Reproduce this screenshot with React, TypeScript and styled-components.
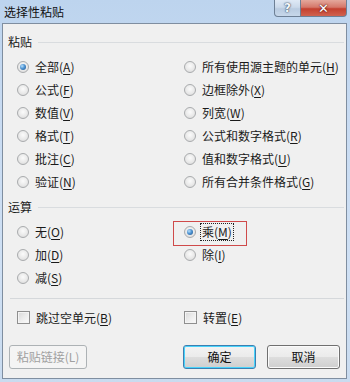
import React from 'react';
import styled, { createGlobalStyle, css } from 'styled-components';

const GlobalStyle = createGlobalStyle`
  html, body { margin: 0; padding: 0; }
  body {
    width: 350px;
    height: 382px;
    overflow: hidden;
    font-family: "Noto Sans CJK SC", "Microsoft YaHei", sans-serif;
    color: #1a1a1a;
  }
`;

const Window = styled.div`
  width: 350px;
  height: 382px;
  box-sizing: border-box;
  padding: 0 3px 3px 2px;
  display: flex;
  flex-direction: column;
  background: linear-gradient(180deg, #bdd4ee 0%, #c8dbf2 30%, #cfe0f4 70%, #c9dbef 100%);
`;

const TitleBar = styled.div`
  height: 23px;
  display: flex;
  align-items: flex-start;
`;

const Title = styled.div`
  padding: 4px 0 0 2px;
  font-size: 12px;
  line-height: 16px;
  color: #111;
`;

const Caption = styled.div`
  margin-left: auto;
  margin-right: 0;
  display: flex;
`;

const CapButton = styled.div<{ $close?: boolean }>`
  height: 17px;
  width: ${(p) => (p.$close ? 46 : 27)}px;
  box-sizing: border-box;
  border: 1px solid #6d7f95;
  border-top: none;
  display: flex;
  align-items: center;
  justify-content: center;
  font-family: "DejaVu Sans", sans-serif;
  font-weight: bold;
  ${(p) =>
    p.$close
      ? css`
          border-radius: 0 0 4px 0;
          border-left: none;
          background: linear-gradient(180deg, #e4a89c 0%, #d5786a 45%, #c4402f 55%, #d0624f 100%);
          color: #fff;
          font-size: 13px;
          text-shadow: 0 0 2px #5a1010, 0 0 1px #5a1010;
        `
      : css`
          border-radius: 0 0 0 4px;
          background: linear-gradient(180deg, #dfe9f5 0%, #cbd9ea 45%, #b9cbe0 55%, #c7d7ea 100%);
          color: #f4f7fb;
          font-size: 12px;
          text-shadow: 0 0 2px #33455c, 0 0 1px #33455c;
        `}
`;

const Client = styled.div`
  flex: 1;
  border: 1px solid #7f8ea0;
  background: #f0f0f0;
  display: flex;
  flex-direction: column;
`;

const Header = styled.div<{ $top: number }>`
  margin-top: ${(p) => p.$top}px;
  height: 20px;
  padding: 0 2px 0 5px;
  display: flex;
  align-items: center;
  gap: 6px;
  font-size: 12px;
  line-height: 16px;
  &::after {
    content: '';
    flex: 1;
    height: 1px;
    background: #d9dcdf;
  }
`;

const OptionGrid = styled.div<{ $top: number }>`
  margin-top: ${(p) => p.$top}px;
  display: grid;
  grid-template-columns: 167px 1fr;
  grid-auto-rows: 23px;
  padding-left: 14px;
`;

const Option = styled.label`
  position: relative;
  display: flex;
  align-items: center;
  gap: 6px;
  font-size: 12px;
  line-height: 16px;
  white-space: nowrap;
`;

const Radio = styled.span<{ $on?: boolean }>`
  width: 12px;
  height: 12px;
  box-sizing: border-box;
  border-radius: 50%;
  border: 1px solid #a9abad;
  background: radial-gradient(circle at 50% 40%, #fbfbfb 0%, #e9e9e9 55%, #d6d6d6 100%);
  display: flex;
  align-items: center;
  justify-content: center;
  flex-shrink: 0;
  &::after {
    content: '';
    display: ${(p) => (p.$on ? 'block' : 'none')};
    width: 6px;
    height: 6px;
    border-radius: 50%;
    background: radial-gradient(circle at 35% 35%, #b9e0fb 0%, #4d93d2 45%, #1c4f86 100%);
  }
`;

const Check = styled.span`
  width: 13px;
  height: 13px;
  box-sizing: border-box;
  border: 1px solid #8f8f8f;
  background: linear-gradient(135deg, #d8d8d8 0%, #ececec 50%, #fbfbfb 100%);
  box-shadow: inset 0 0 0 1px #f4f4f4;
  flex-shrink: 0;
`;

const Key = styled.span`
  text-decoration: underline;
  text-underline-offset: 2px;
`;

const Focus = styled.span`
  outline: 1px dotted #222;
  outline-offset: 0;
  padding: 0 1px;
  margin-left: -1px;
`;

const Mark = styled.span`
  position: absolute;
  left: -11px;
  top: 1px;
  width: 74px;
  height: 25px;
  box-sizing: border-box;
  border: 1px solid #cf4a4a;
  pointer-events: none;
`;

const Separator = styled.div`
  margin: 9px 2px 0 7px;
  height: 1px;
  background: #d5d8db;
`;

const Buttons = styled.div`
  margin-top: 16px;
  padding: 0 6px;
  display: flex;
  gap: 11px;
`;

const Button = styled.button<{ $w: number; $default?: boolean }>`
  width: ${(p) => p.$w}px;
  height: 24px;
  box-sizing: border-box;
  padding: 0;
  border-radius: 3px;
  font-family: inherit;
  font-size: 12px;
  line-height: 16px;
  color: #111;
  border: 1px solid ${(p) => (p.$default ? '#3c7fb1' : '#707070')};
  background: linear-gradient(180deg, #f3f3f3 0%, #ebebeb 48%, #dddddd 52%, #cfcfcf 100%);
  box-shadow: inset 0 0 0 1px ${(p) => (p.$default ? '#48d3fb' : '#fbfbfb')};
  &:disabled {
    color: #a0a0a0;
    border-color: #adb2b5;
    background: #f4f4f4;
    box-shadow: none;
  }
`;

const LeftButton = styled(Button)`
  margin-right: auto;
`;

type Item = { text: string; key: string; on?: boolean; mark?: boolean };

const paste: Item[] = [
  { text: '全部', key: 'A', on: true },
  { text: '所有使用源主题的单元', key: 'H' },
  { text: '公式', key: 'F' },
  { text: '边框除外', key: 'X' },
  { text: '数值', key: 'V' },
  { text: '列宽', key: 'W' },
  { text: '格式', key: 'T' },
  { text: '公式和数字格式', key: 'R' },
  { text: '批注', key: 'C' },
  { text: '值和数字格式', key: 'U' },
  { text: '验证', key: 'N' },
  { text: '所有合并条件格式', key: 'G' },
];

const ops: Item[] = [
  { text: '无', key: 'O' },
  { text: '乘', key: 'M', on: true, mark: true },
  { text: '加', key: 'D' },
  { text: '除', key: 'I' },
  { text: '减', key: 'S' },
];

function Label({ item }: { item: Item }) {
  const body = (
    <>
      {item.text}(<Key>{item.key}</Key>)
    </>
  );
  return item.mark ? <Focus>{body}</Focus> : <span>{body}</span>;
}

function RadioOption({ item }: { item: Item }) {
  return (
    <Option>
      <Radio $on={item.on} />
      <Label item={item} />
      {item.mark && <Mark />}
    </Option>
  );
}

export default function App() {
  return (
    <>
      <GlobalStyle />
      <Window>
        <TitleBar>
          <Title>选择性粘贴</Title>
          <Caption>
            <CapButton>?</CapButton>
            <CapButton $close>✕</CapButton>
          </Caption>
        </TitleBar>
        <Client>
          <Header $top={8}>粘贴</Header>
          <OptionGrid $top={3}>
            {paste.map((it) => (
              <RadioOption key={it.key} item={it} />
            ))}
          </OptionGrid>
          <Header $top={4}>运算</Header>
          <OptionGrid $top={3}>
            {ops.map((it) => (
              <RadioOption key={it.key} item={it} />
            ))}
          </OptionGrid>
          <Separator />
          <OptionGrid $top={7}>
            <Option>
              <Check />
              <span>跳过空单元(<Key>B</Key>)</span>
            </Option>
            <Option>
              <Check />
              <span>转置(<Key>E</Key>)</span>
            </Option>
          </OptionGrid>
          <Buttons>
            <LeftButton $w={78} disabled>
              粘贴链接(L)
            </LeftButton>
            <Button $w={73} $default>
              确定
            </Button>
            <Button $w={73}>取消</Button>
          </Buttons>
        </Client>
      </Window>
    </>
  );
}
